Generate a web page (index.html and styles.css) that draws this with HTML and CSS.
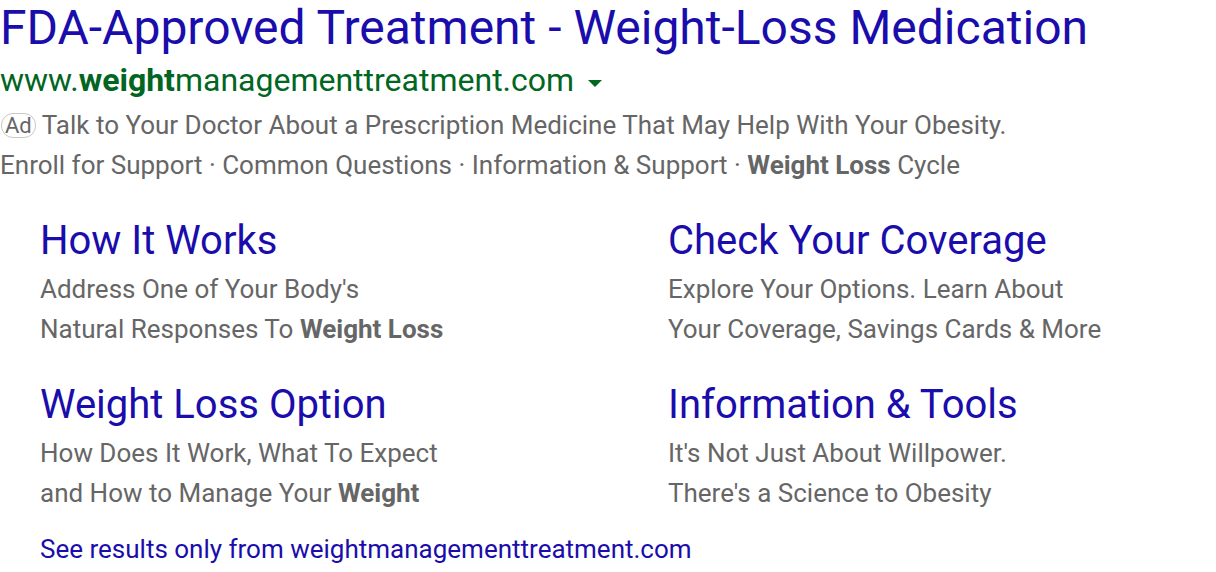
FILE: index.html
```html
<!DOCTYPE html>
<html lang="en">
<head>
<meta charset="utf-8">
<title>Ad</title>
<link rel="stylesheet" href="styles.css">
</head>
<body>
<div class="ad">
  <h3 class="title"><a href="#">FDA-Approved Treatment - Weight-Loss Medication</a></h3>
  <div class="url">www.<b>weight</b>managementtreatment.com <span class="caret"></span></div>
  <div class="desc"><span class="badge">Ad</span> Talk to Your Doctor About a Prescription Medicine That May Help With Your Obesity.</div>
  <div class="links">Enroll for Support · Common Questions · Information &amp; Support · <b>Weight Loss</b> Cycle</div>
  <div class="sitelinks">
    <div class="sl">
      <a class="sl-title" href="#">How It Works</a>
      <div class="sl-desc">Address One of Your Body's<br>Natural Responses To <b>Weight Loss</b></div>
    </div>
    <div class="sl">
      <a class="sl-title" href="#">Check Your Coverage</a>
      <div class="sl-desc">Explore Your Options. Learn About<br>Your Coverage, Savings Cards &amp; More</div>
    </div>
    <div class="sl">
      <a class="sl-title" href="#">Weight Loss Option</a>
      <div class="sl-desc">How Does It Work, What To Expect<br>and How to Manage Your <b>Weight</b></div>
    </div>
    <div class="sl">
      <a class="sl-title" href="#">Information &amp; Tools</a>
      <div class="sl-desc">It's Not Just About Willpower.<br>There's a Science to Obesity</div>
    </div>
  </div>
  <a class="more" href="#">See results only from weightmanagementtreatment.com</a>
</div>
</body>
</html>
```
FILE: styles.css
```css
html, body {
  margin: 0;
  padding: 0;
  background: #fff;
}
body {
  font-family: Roboto, "Liberation Sans", Arial, sans-serif;
}
a { text-decoration: none; }
.ad {
  padding: 0;
}
.title {
  margin: 0;
  font-weight: 400;
  font-size: 48px;
  line-height: 56px;
}
.title a { color: #1a0dab; }
.url {
  color: #006621;
  font-size: 32px;
  line-height: 48px;
}
.url b { font-weight: 700; }
.caret {
  display: inline-block;
  width: 0;
  height: 0;
  border-left: 7px solid transparent;
  border-right: 7px solid transparent;
  border-top: 7px solid #006621;
  vertical-align: 4px;
  margin-left: 6px;
}
.desc, .links {
  color: #666;
  font-size: 26px;
  line-height: 40px;
}
.desc {
  margin-top: 1px;
}
.desc b, .links b { font-weight: 700; }
.badge {
  display: inline-block;
  border: 1px solid #c8c8c8;
  border-radius: 12px;
  font-size: 22px;
  line-height: 23px;
  padding: 0 3px;
  margin-left: 1px;
  color: #666;
  vertical-align: 1px;
}
.sitelinks {
  display: grid;
  grid-template-columns: 628px 1fr;
  padding-left: 40px;
  margin-top: 32px;
  row-gap: 32px;
}
.sl { display: flex; flex-direction: column; }
.sl-title {
  color: #1a0dab;
  font-size: 40px;
  line-height: 48px;
}
.sl-desc {
  color: #666;
  font-size: 26px;
  line-height: 40px;
  margin-top: 4px;
}
.sl-desc b { font-weight: 700; }
.more {
  display: block;
  margin-left: 40px;
  margin-top: 21px;
  color: #1a0dab;
  font-size: 26px;
  line-height: 30px;
}
```
